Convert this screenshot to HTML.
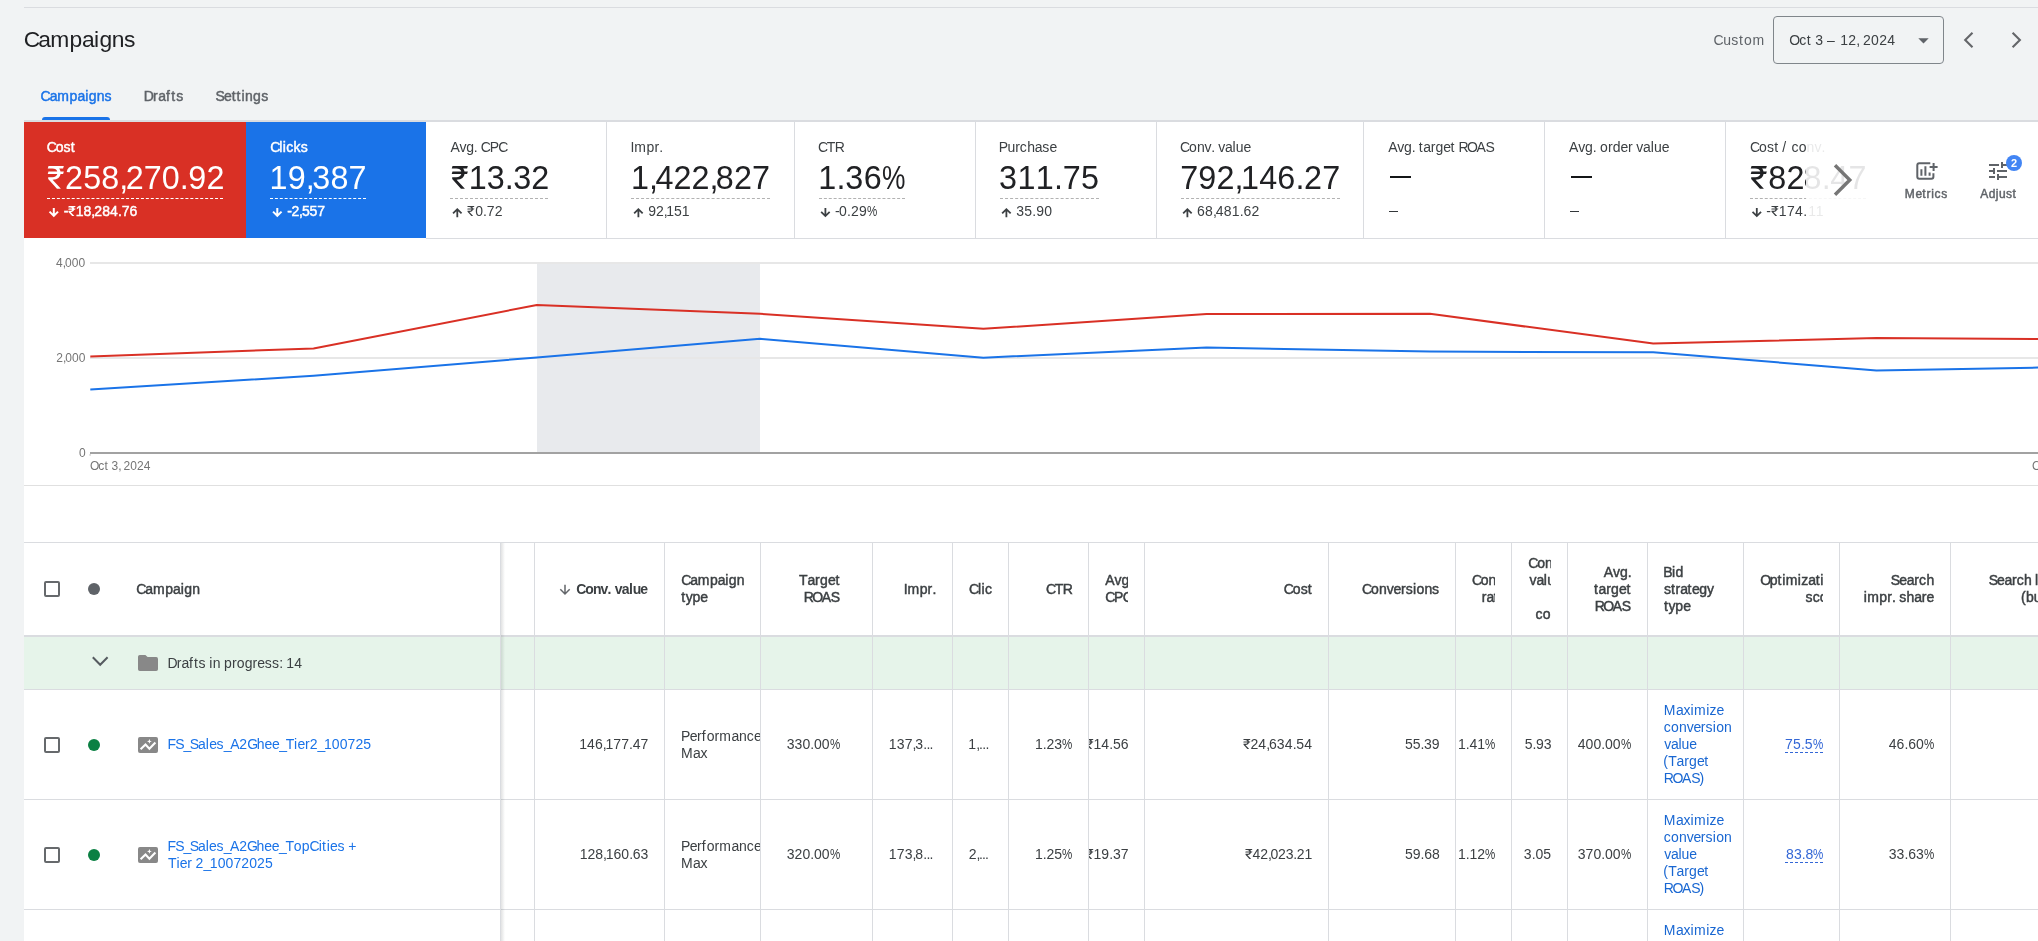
<!DOCTYPE html>
<html lang="en"><head><meta charset="utf-8"><title>Campaigns</title>
<style>
html,body{margin:0;padding:0;background:#f1f3f4}
body{width:2038px;height:941px;overflow:hidden;position:relative;font-family:"Liberation Sans",sans-serif;font-size:14px;color:#3c4043}
.t{position:absolute;white-space:pre;margin:0;padding:0;font-kerning:none}
.clip{position:absolute;overflow:hidden}
.r{position:absolute;display:block}
.dash{position:absolute;height:0;border-top:1px dashed}
#pg{position:absolute;left:0;top:0;width:2038px;height:941px;overflow:hidden;will-change:transform}
</style></head>
<body>
<div id="pg">

<div class="r" style="left:24px;top:7px;width:2014px;height:1px;background:#dadce0;"></div>
<div class="r" style="left:1773px;top:16px;width:169px;height:46px;border:1px solid #80868b;border-radius:4px"></div>
<svg class="r" style="left:1918px;top:37.5px" width="11" height="6"><path d="M0.3 0.2H10.7L5.5 5.4Z" fill="#5f6368"/></svg>
<svg class="r" style="left:1960px;top:30px" width="16" height="20"><path d="M12.5 2.75L5.2 10.05L12.5 17.35" fill="none" stroke="#646669" stroke-width="2.1"/></svg>
<svg class="r" style="left:2009px;top:30px" width="16" height="20"><path d="M3.6 2.75L10.9 10.05L3.6 17.35" fill="none" stroke="#646669" stroke-width="2.1"/></svg>
<div class="r" style="left:24px;top:120px;width:2014px;height:2px;background:#dadce0;"></div>
<div class="r" style="left:42px;top:117px;width:68px;height:3px;background:#1a73e8;border-radius:3px 3px 0 0"></div>
<div class="r" style="left:24px;top:122px;width:2014px;height:819px;background:#fff;"></div>
<div class="r" style="left:24px;top:122px;width:222px;height:116px;background:#d93025;"></div>
<div class="r" style="left:246px;top:122px;width:180px;height:116px;background:#1a73e8;"></div>
<div class="r" style="left:426px;top:238px;width:1612px;height:1px;background:#dadce0;"></div>
<div class="r" style="left:606px;top:122px;width:1px;height:116px;background:#dadce0;"></div>
<div class="r" style="left:794px;top:122px;width:1px;height:116px;background:#dadce0;"></div>
<div class="r" style="left:975px;top:122px;width:1px;height:116px;background:#dadce0;"></div>
<div class="r" style="left:1156px;top:122px;width:1px;height:116px;background:#dadce0;"></div>
<div class="r" style="left:1363px;top:122px;width:1px;height:116px;background:#dadce0;"></div>
<div class="r" style="left:1544px;top:122px;width:1px;height:116px;background:#dadce0;"></div>
<div class="r" style="left:1725px;top:122px;width:1px;height:116px;background:#dadce0;"></div>
<div class="dash" style="left:47px;top:198px;width:176.4px;border-top-color:#fff"></div>
<div class="dash" style="left:270px;top:198px;width:96px;border-top-color:#fff"></div>
<div class="dash" style="left:450px;top:198px;width:98.20000000000005px;border-top-color:#b2b2b2"></div>
<div class="dash" style="left:631px;top:198px;width:139px;border-top-color:#b2b2b2"></div>
<div class="dash" style="left:819px;top:198px;width:86px;border-top-color:#b2b2b2"></div>
<div class="dash" style="left:1000px;top:198px;width:98.5px;border-top-color:#b2b2b2"></div>
<div class="dash" style="left:1181px;top:198px;width:158.5px;border-top-color:#b2b2b2"></div>
<div class="dash" style="left:1750px;top:198px;width:116px;border-top-color:#b2b2b2"></div>
<svg class="r" style="left:0;top:0;overflow:visible" width="1" height="1"><path d="M53.8 207.9V215.88580000000002M49.55 211.63580000000002L53.8 215.88580000000002L58.05 211.63580000000002" fill="none" stroke="#fff" stroke-width="2.0"/></svg>
<svg class="r" style="left:0;top:0;overflow:visible" width="1" height="1"><path d="M277.3 207.9V215.88580000000002M273.05 211.63580000000002L277.3 215.88580000000002L281.55 211.63580000000002" fill="none" stroke="#fff" stroke-width="2.0"/></svg>
<svg class="r" style="left:0;top:0;overflow:visible" width="1" height="1"><path d="M457.3 217.3V209.17278000000002M453.05 213.42278000000002L457.3 209.17278000000002L461.55 213.42278000000002" fill="none" stroke="#3c4043" stroke-width="1.8"/></svg>
<svg class="r" style="left:0;top:0;overflow:visible" width="1" height="1"><path d="M638.4 217.3V209.17278000000002M634.15 213.42278000000002L638.4 209.17278000000002L642.65 213.42278000000002" fill="none" stroke="#3c4043" stroke-width="1.8"/></svg>
<svg class="r" style="left:0;top:0;overflow:visible" width="1" height="1"><path d="M825.4 207.9V216.02722M821.15 211.77722L825.4 216.02722L829.65 211.77722" fill="none" stroke="#3c4043" stroke-width="1.8"/></svg>
<svg class="r" style="left:0;top:0;overflow:visible" width="1" height="1"><path d="M1006.4 217.3V209.17278000000002M1002.15 213.42278000000002L1006.4 209.17278000000002L1010.65 213.42278000000002" fill="none" stroke="#3c4043" stroke-width="1.8"/></svg>
<svg class="r" style="left:0;top:0;overflow:visible" width="1" height="1"><path d="M1187.4 217.3V209.17278000000002M1183.15 213.42278000000002L1187.4 209.17278000000002L1191.65 213.42278000000002" fill="none" stroke="#3c4043" stroke-width="1.8"/></svg>
<svg class="r" style="left:0;top:0;overflow:visible" width="1" height="1"><path d="M1756.8 207.9V216.02722M1752.55 211.77722L1756.8 216.02722L1761.05 211.77722" fill="none" stroke="#3c4043" stroke-width="1.8"/></svg>
<div class="r" style="left:1390px;top:176px;width:21px;height:2px;background:#141618;"></div>
<div class="r" style="left:1389px;top:211px;width:9px;height:1px;background:#33373a;"></div>
<div class="r" style="left:1571px;top:176px;width:21px;height:2px;background:#141618;"></div>
<div class="r" style="left:1570px;top:211px;width:9px;height:1px;background:#33373a;"></div>
<div class="clip" style="left:1726px;top:123px;width:174px;height:115px"><span class="t" style="left:23.91px;top:15.00px;font-size:14px;line-height:18px;letter-spacing:0.17px;color:#3c4043;"><span style="letter-spacing:-1.03px">C</span>o<span style="letter-spacing:0.22px">s</span><span style="letter-spacing:0.67px">t</span><span style="letter-spacing:-0.43px"> </span><span style="letter-spacing:1.87px">/</span><span style="letter-spacing:-0.43px"> </span><span style="letter-spacing:0.32px">c</span>o</span>
<span class="t" style="left:80.50px;top:15.00px;font-size:14px;line-height:18px;letter-spacing:0.00px;color:#3c4043;"><span style="letter-spacing:0.15px">n</span>v.</span>
<span class="t" style="left:23.80px;top:34.00px;font-size:32.3px;line-height:42px;letter-spacing:0.38px;color:#202124;"><svg style="display:inline-block;vertical-align:baseline;width:17.54px;height:22.75px;margin-right:-0.99px;overflow:visible" preserveAspectRatio="none" viewBox="0 0 1059 1456"><path fill="#202124" transform="matrix(1 0 0 -1 0 1456)" d="M45 1298 92 1456H1017L971 1298H734Q798 1218 816 1100H1017L971 942H819Q802 784 691 684Q580 584 336 584L828 12V0H601L72 618L71 742H315Q448 742 524.5 798Q601 854 622 942H43L89 1100H620Q598 1190 523 1244Q448 1298 309 1298Z"/></svg><i style="display:inline-block;width:1.82px"></i>82</span>
<span class="t" style="left:77.59px;top:34.00px;font-size:32.3px;line-height:42px;letter-spacing:0.18px;color:#202124;">8<span style="letter-spacing:-0.37px">.</span>47</span>
<span class="t" style="left:40.37px;top:79.00px;font-size:14px;line-height:18px;letter-spacing:0.41px;color:#3c4043;"><span style="letter-spacing:-0.49px">-</span><svg style="display:inline-block;vertical-align:baseline;width:7.67px;height:9.95px;margin-right:-0.43px;overflow:visible" preserveAspectRatio="none" viewBox="0 0 1059 1456"><path fill="#3c4043" transform="matrix(1 0 0 -1 0 1456)" d="M45 1298 92 1456H1017L971 1298H734Q798 1218 816 1100H1017L971 942H819Q802 784 691 684Q580 584 336 584L828 12V0H601L72 618L71 742H315Q448 742 524.5 798Q601 854 622 942H43L89 1100H620Q598 1190 523 1244Q448 1298 309 1298Z"/></svg><i style="display:inline-block;width:0.94px"></i>174<span style="letter-spacing:0.11px">.</span></span>
<span class="t" style="left:82.30px;top:79.00px;font-size:14px;line-height:18px;letter-spacing:-0.32px;color:#3c4043;">11</span></div>
<div class="r" style="left:1806px;top:123px;width:232px;height:115px;background:rgba(255,255,255,.885);"></div>
<svg class="r" style="left:1820px;top:150px" width="40" height="60"><path d="M15 15.2L29.8 30L15 44.8" fill="none" stroke="#767676" stroke-width="3.4"/></svg>
<div class="r" style="left:1880px;top:123px;width:158px;height:115px;background:#fff;"></div>
<svg class="r" style="left:1913px;top:159px" width="26" height="24" fill="none" stroke="#5f6368" stroke-width="2"><path d="M17.3 4.2H6.3a2 2 0 0 0-2 2V17.8a2 2 0 0 0 2 2H18.4a2 2 0 0 0 2-2V14.2"/><path d="M20.6 4.1V12.1M16.6 8.1H24.6"/><path d="M8.4 10.2V16.8M12.4 7.3V16.8M16.6 13.5V16.8"/></svg>
<svg class="r" style="left:1986px;top:159px" width="24" height="24" viewBox="0 0 24 24"><path fill="#5f6368" d="M3 17v2h6v-2H3zM3 5v2h10V5H3zm10 16v-2h8v-2h-8v-2h-2v6h2zM7 9v2H3v2h4v2h2V9H7zm14 4v-2H11v2h10zm-6-4h2V7h4V5h-4V3h-2v6z"/></svg>
<div class="r" style="left:2006px;top:155px;width:16px;height:16px;background:#4285f4;border-radius:50%"></div>
<div class="r" style="left:24px;top:485px;width:2014px;height:1px;background:#e0e0e0;"></div>
<svg class="r" style="left:0;top:0" width="2038" height="941"><rect x="537" y="263" width="223" height="189.5" fill="#e8eaed"/><rect x="90" y="262" width="1948" height="2" fill="#e7e7e7"/><rect x="90" y="357" width="1948" height="2" fill="#e7e7e7"/><rect x="90" y="452" width="1948" height="2" fill="#a2a2a2"/><rect x="89.4" y="454" width="1.4" height="1.8" fill="#d4d4d4"/><polyline points="90.3,389.5 313.57,375.7 536.84,357.5 760.11,338.8 983.38,357.7 1206.65,347.5 1429.92,351.6 1653.19,352.3 1876.46,370.4 2099.73,366.5" fill="none" stroke="#1a73e8" stroke-width="2" stroke-linejoin="round"/><polyline points="90.3,356.6 313.57,348.4 536.84,305.0 760.11,313.8 983.38,328.8 1206.65,314.0 1429.92,313.8 1653.19,343.6 1876.46,338.0 2099.73,339.4" fill="none" stroke="#d93025" stroke-width="2" stroke-linejoin="round"/></svg>
<div class="r" style="left:24px;top:542px;width:2014px;height:1px;background:#dadce0;"></div>
<div class="r" style="left:24px;top:637px;width:2014px;height:52px;background:#e6f4ea;"></div>
<div class="r" style="left:24px;top:635px;width:2014px;height:2px;background:#dadce0;"></div>
<div class="r" style="left:24px;top:689px;width:2014px;height:1px;background:#dadce0;"></div>
<div class="r" style="left:24px;top:799px;width:2014px;height:1px;background:#dadce0;"></div>
<div class="r" style="left:24px;top:909px;width:2014px;height:1px;background:#dadce0;"></div>
<div class="r" style="left:534px;top:543px;width:1px;height:398px;background:#dadce0;"></div>
<div class="r" style="left:664px;top:543px;width:1px;height:398px;background:#dadce0;"></div>
<div class="r" style="left:760px;top:543px;width:1px;height:398px;background:#dadce0;"></div>
<div class="r" style="left:872px;top:543px;width:1px;height:398px;background:#dadce0;"></div>
<div class="r" style="left:952px;top:543px;width:1px;height:398px;background:#dadce0;"></div>
<div class="r" style="left:1008px;top:543px;width:1px;height:398px;background:#dadce0;"></div>
<div class="r" style="left:1088px;top:543px;width:1px;height:398px;background:#dadce0;"></div>
<div class="r" style="left:1144px;top:543px;width:1px;height:398px;background:#dadce0;"></div>
<div class="r" style="left:1328px;top:543px;width:1px;height:398px;background:#dadce0;"></div>
<div class="r" style="left:1455px;top:543px;width:1px;height:398px;background:#dadce0;"></div>
<div class="r" style="left:1511px;top:543px;width:1px;height:398px;background:#dadce0;"></div>
<div class="r" style="left:1567px;top:543px;width:1px;height:398px;background:#dadce0;"></div>
<div class="r" style="left:1647px;top:543px;width:1px;height:398px;background:#dadce0;"></div>
<div class="r" style="left:1743px;top:543px;width:1px;height:398px;background:#dadce0;"></div>
<div class="r" style="left:1839px;top:543px;width:1px;height:398px;background:#dadce0;"></div>
<div class="r" style="left:1950px;top:543px;width:1px;height:398px;background:#dadce0;"></div>
<div class="r" style="left:500px;top:543px;width:1px;height:398px;background:#dadce0;"></div>
<div class="r" style="left:501px;top:543px;width:4px;height:398px;background:linear-gradient(to right,rgba(60,64,67,.15),rgba(60,64,67,0));"></div>
<div class="r" style="left:44px;top:581px;width:12px;height:12px;border:2px solid #66696c;border-radius:2px"></div>
<div class="r" style="left:88px;top:583px;width:12px;height:12px;background:#5f6368;border-radius:50%"></div>
<div class="r" style="left:44px;top:737px;width:12px;height:12px;border:2px solid #66696c;border-radius:2px;background:#fff"></div>
<div class="r" style="left:88px;top:739px;width:12px;height:12px;background:#0b8043;border-radius:50%"></div>
<svg class="r" style="left:138px;top:737px" width="20" height="16"><rect width="20" height="16" rx="1.9" fill="#888"/><path d="M2.6 12.3L7.5 7.6L11.4 11.7L17.4 5.6" fill="none" stroke="#fff" stroke-width="2.1"/><path d="M11.4 2L12.1 3.7L13.8 4.4L12.1 5.1L11.4 6.8L10.7 5.1L9 4.4L10.7 3.7Z" fill="#fff"/></svg>
<div class="r" style="left:44px;top:847px;width:12px;height:12px;border:2px solid #66696c;border-radius:2px;background:#fff"></div>
<div class="r" style="left:88px;top:849px;width:12px;height:12px;background:#0b8043;border-radius:50%"></div>
<svg class="r" style="left:138px;top:847px" width="20" height="16"><rect width="20" height="16" rx="1.9" fill="#888"/><path d="M2.6 12.3L7.5 7.6L11.4 11.7L17.4 5.6" fill="none" stroke="#fff" stroke-width="2.1"/><path d="M11.4 2L12.1 3.7L13.8 4.4L12.1 5.1L11.4 6.8L10.7 5.1L9 4.4L10.7 3.7Z" fill="#fff"/></svg>
<svg class="r" style="left:0;top:0;overflow:visible" width="1" height="1"><path d="M565.0 584.8V593.93935M560.3 589.23935L565.0 593.93935L569.7 589.23935" fill="none" stroke="#63666a" stroke-width="1.5"/></svg>
<svg class="r" style="left:90px;top:654px" width="20" height="16"><path d="M2.8 3.2L10.2 10.8L17.6 3.2" fill="none" stroke="#565b60" stroke-width="2"/></svg>
<svg class="r" style="left:138px;top:655px" width="20" height="16"><path d="M1.8 0H7.4L9.6 2.1H18.2A1.8 1.8 0 0 1 20 3.9V14.2A1.8 1.8 0 0 1 18.2 16H1.8A1.8 1.8 0 0 1 0 14.2V1.8A1.8 1.8 0 0 1 1.8 0Z" fill="#888"/></svg>
<div class="dash" style="left:1785px;top:752px;width:38px;border-top-color:#3367d6"></div>
<div class="dash" style="left:1785px;top:862px;width:38px;border-top-color:#3367d6"></div>
<span class="t" style="left:23.80px;top:25.00px;font-size:22.8px;line-height:29px;letter-spacing:-0.65px;color:#202124;"><span style="letter-spacing:-2.10px">C</span>a<span style="letter-spacing:0.35px">m</span><span style="letter-spacing:-0.30px">p</span>a<span style="letter-spacing:0.35px">i</span><span style="letter-spacing:-0.30px">g</span><span style="letter-spacing:-0.50px">n</span><span style="letter-spacing:0.00px">s</span></span>
<span class="t" style="left:1713.61px;top:31.00px;font-size:14px;line-height:18px;letter-spacing:-0.58px;color:#5f6368;">C<span style="letter-spacing:0.37px">u</span><span style="letter-spacing:0.67px">s</span><span style="letter-spacing:1.12px">t</span><span style="letter-spacing:0.62px">o</span><span style="letter-spacing:1.02px">m</span></span>
<span class="t" style="left:1789.28px;top:31.00px;font-size:14px;line-height:18px;letter-spacing:0.31px;color:#3c4043;"><span style="letter-spacing:-1.04px">O</span><span style="letter-spacing:0.56px">c</span><span style="letter-spacing:0.91px">t</span><span style="letter-spacing:-0.19px"> </span>3<span style="letter-spacing:-0.19px"> </span><span style="letter-spacing:1.61px">–</span><span style="letter-spacing:-0.19px"> </span>12<span style="letter-spacing:-0.94px">,</span><span style="letter-spacing:-0.19px"> </span>2024</span>
<span class="t" style="left:40.46px;top:87.00px;font-size:14px;line-height:18px;letter-spacing:-0.16px;color:#1a73e8;-webkit-text-stroke:0.45px #1a73e8;"><span style="letter-spacing:-0.91px">C</span>a<span style="letter-spacing:0.59px">m</span><span style="letter-spacing:0.14px">p</span>a<span style="letter-spacing:0.49px">i</span><span style="letter-spacing:0.19px">g</span><span style="letter-spacing:0.04px">n</span><span style="letter-spacing:0.29px">s</span></span>
<span class="t" style="left:143.70px;top:87.00px;font-size:14px;line-height:18px;letter-spacing:0.49px;color:#5f6368;-webkit-text-stroke:0.45px #5f6368;"><span style="letter-spacing:-0.71px">D</span>r<span style="letter-spacing:0.04px">a</span><span style="letter-spacing:1.29px">f</span><span style="letter-spacing:0.99px">t</span>s</span>
<span class="t" style="left:215.53px;top:87.00px;font-size:14px;line-height:18px;letter-spacing:0.90px;color:#5f6368;-webkit-text-stroke:0.45px #5f6368;"><span style="letter-spacing:-0.75px">S</span><span style="letter-spacing:-0.10px">e</span>tt<span style="letter-spacing:0.60px">i</span><span style="letter-spacing:0.15px">n</span><span style="letter-spacing:0.30px">g</span><span style="letter-spacing:0.40px">s</span></span>
<span class="t" style="left:46.76px;top:138.00px;font-size:14px;line-height:18px;letter-spacing:-1.12px;color:#fff;-webkit-text-stroke:0.45px #fff;">C<span style="letter-spacing:0.03px">o</span><span style="letter-spacing:0.08px">s</span><span style="letter-spacing:0.58px">t</span></span>
<span class="t" style="left:47.00px;top:157.00px;font-size:32.3px;line-height:42px;letter-spacing:0.10px;color:#fff;"><svg style="display:inline-block;vertical-align:baseline;width:17.54px;height:22.75px;margin-right:-0.99px;overflow:visible" preserveAspectRatio="none" viewBox="0 0 1059 1456"><path fill="#fff" transform="matrix(1 0 0 -1 0 1456)" d="M45 1298 92 1456H1017L971 1298H734Q798 1218 816 1100H1017L971 942H819Q802 784 691 684Q580 584 336 584L828 12V0H601L72 618L71 742H315Q448 742 524.5 798Q601 854 622 942H43L89 1100H620Q598 1190 523 1244Q448 1298 309 1298Z"/></svg><i style="display:inline-block;width:1.54px"></i>258<span style="letter-spacing:-2.60px">,</span>270<span style="letter-spacing:-0.45px">.</span>92</span>
<span class="t" style="left:63.77px;top:202.00px;font-size:14px;line-height:18px;letter-spacing:0.06px;color:#fff;-webkit-text-stroke:0.45px #fff;"><span style="letter-spacing:-0.14px">-</span><svg style="display:inline-block;vertical-align:baseline;width:7.80px;height:9.95px;margin-right:-0.44px;overflow:visible" preserveAspectRatio="none" viewBox="0 0 1076 1456"><path fill="#fff" transform="matrix(1 0 0 -1 0 1456)" d="M40 1253 95 1456H1036L985 1274H768Q819 1200 834 1098H1036L985 916H836Q815 764 711.5 670Q608 576 391 558L857 13V0H571L62 594L61 747H313Q425 747 491 794Q557 841 579 916H41L91 1098H574Q527 1248 327 1253Z"/></svg><i style="display:inline-block;width:-0.09px"></i>18<span style="letter-spacing:-0.89px">,</span>284<span style="letter-spacing:-0.09px">.</span>76</span>
<span class="t" style="left:270.26px;top:138.00px;font-size:14px;line-height:18px;letter-spacing:0.34px;color:#fff;-webkit-text-stroke:0.45px #fff;"><span style="letter-spacing:-1.06px">C</span>li<span style="letter-spacing:0.24px">c</span><span style="letter-spacing:0.19px">k</span><span style="letter-spacing:0.14px">s</span></span>
<span class="t" style="left:269.60px;top:157.00px;font-size:32.3px;line-height:42px;letter-spacing:0.17px;color:#fff;">19<span style="letter-spacing:-2.53px">,</span>387</span>
<span class="t" style="left:287.17px;top:202.00px;font-size:14px;line-height:18px;letter-spacing:-0.16px;color:#fff;-webkit-text-stroke:0.45px #fff;"><span style="letter-spacing:-0.36px">-</span>2<span style="letter-spacing:-1.11px">,</span>557</span>
<span class="t" style="left:450.57px;top:138.00px;font-size:14px;line-height:18px;letter-spacing:-0.38px;color:#3c4043;">Av<span style="letter-spacing:-0.08px">g</span>.<span style="letter-spacing:-0.58px"> </span><span style="letter-spacing:-1.18px">C</span><span style="letter-spacing:-0.68px">P</span><span style="letter-spacing:-1.18px">C</span></span>
<span class="t" style="left:450.60px;top:157.00px;font-size:32.3px;line-height:42px;letter-spacing:0.06px;color:#202124;"><svg style="display:inline-block;vertical-align:baseline;width:17.54px;height:22.75px;margin-right:-0.99px;overflow:visible" preserveAspectRatio="none" viewBox="0 0 1059 1456"><path fill="#202124" transform="matrix(1 0 0 -1 0 1456)" d="M45 1298 92 1456H1017L971 1298H734Q798 1218 816 1100H1017L971 942H819Q802 784 691 684Q580 584 336 584L828 12V0H601L72 618L71 742H315Q448 742 524.5 798Q601 854 622 942H43L89 1100H620Q598 1190 523 1244Q448 1298 309 1298Z"/></svg><i style="display:inline-block;width:1.50px"></i>13<span style="letter-spacing:-0.49px">.</span>32</span>
<span class="t" style="left:467.36px;top:202.00px;font-size:14px;line-height:18px;letter-spacing:0.10px;color:#3c4043;"><svg style="display:inline-block;vertical-align:baseline;width:7.67px;height:9.95px;margin-right:-0.43px;overflow:visible" preserveAspectRatio="none" viewBox="0 0 1059 1456"><path fill="#3c4043" transform="matrix(1 0 0 -1 0 1456)" d="M45 1298 92 1456H1017L971 1298H734Q798 1218 816 1100H1017L971 942H819Q802 784 691 684Q580 584 336 584L828 12V0H601L72 618L71 742H315Q448 742 524.5 798Q601 854 622 942H43L89 1100H620Q598 1190 523 1244Q448 1298 309 1298Z"/></svg><i style="display:inline-block;width:0.63px"></i>0<span style="letter-spacing:-0.20px">.</span>72</span>
<span class="t" style="left:630.59px;top:138.00px;font-size:14px;line-height:18px;letter-spacing:0.06px;color:#3c4043;"><span style="letter-spacing:-0.14px">I</span><span style="letter-spacing:0.56px">m</span>pr<span style="letter-spacing:-0.24px">.</span></span>
<span class="t" style="left:631.00px;top:157.00px;font-size:32.3px;line-height:42px;letter-spacing:0.07px;color:#202124;">1<span style="letter-spacing:-2.63px">,</span>422<span style="letter-spacing:-2.63px">,</span>827</span>
<span class="t" style="left:648.14px;top:202.00px;font-size:14px;line-height:18px;letter-spacing:-0.02px;color:#3c4043;">92<span style="letter-spacing:-1.27px">,</span>151</span>
<span class="t" style="left:818.01px;top:138.00px;font-size:14px;line-height:18px;letter-spacing:-1.42px;color:#3c4043;">C<span style="letter-spacing:-0.62px">T</span><span style="letter-spacing:-1.92px">R</span></span>
<span class="t" style="left:818.30px;top:157.00px;font-size:32.3px;line-height:42px;letter-spacing:0.33px;color:#202124;">1<span style="letter-spacing:-0.22px">.</span>36<span style="display:inline-block;width:23.77px;letter-spacing:0;transform:scaleX(0.816);transform-origin:0 50%">%</span></span>
<span class="t" style="left:834.97px;top:202.00px;font-size:14px;line-height:18px;letter-spacing:0.25px;color:#3c4043;"><span style="letter-spacing:-0.65px">-</span>0<span style="letter-spacing:-0.05px">.</span>29<span style="display:inline-block;width:10.40px;letter-spacing:0;transform:scaleX(0.824);transform-origin:0 50%">%</span></span>
<span class="t" style="left:998.70px;top:138.00px;font-size:14px;line-height:18px;letter-spacing:-0.57px;color:#3c4043;">P<span style="letter-spacing:-0.12px">u</span><span style="letter-spacing:0.03px">r</span><span style="letter-spacing:0.28px">c</span><span style="letter-spacing:-0.17px">h</span><span style="letter-spacing:-0.22px">a</span><span style="letter-spacing:0.18px">s</span><span style="letter-spacing:-0.42px">e</span></span>
<span class="t" style="left:999.10px;top:157.00px;font-size:32.3px;line-height:42px;letter-spacing:0.32px;color:#202124;">311<span style="letter-spacing:-0.23px">.</span>75</span>
<span class="t" style="left:1016.28px;top:202.00px;font-size:14px;line-height:18px;letter-spacing:0.24px;color:#3c4043;">35<span style="letter-spacing:-0.06px">.</span>90</span>
<span class="t" style="left:1180.01px;top:138.00px;font-size:14px;line-height:18px;letter-spacing:-0.31px;color:#3c4043;"><span style="letter-spacing:-1.11px">C</span><span style="letter-spacing:0.09px">o</span><span style="letter-spacing:-0.16px">n</span>v.<span style="letter-spacing:-0.51px"> </span>v<span style="letter-spacing:-0.26px">a</span><span style="letter-spacing:0.19px">l</span><span style="letter-spacing:-0.16px">u</span><span style="letter-spacing:-0.46px">e</span></span>
<span class="t" style="left:1180.14px;top:157.00px;font-size:32.3px;line-height:42px;letter-spacing:0.18px;color:#202124;">792<span style="letter-spacing:-2.52px">,</span>146<span style="letter-spacing:-0.37px">.</span>27</span>
<span class="t" style="left:1197.12px;top:202.00px;font-size:14px;line-height:18px;letter-spacing:0.17px;color:#3c4043;">68<span style="letter-spacing:-1.08px">,</span>481<span style="letter-spacing:-0.13px">.</span>62</span>
<span class="t" style="left:1388.27px;top:138.00px;font-size:14px;line-height:18px;letter-spacing:-0.31px;color:#3c4043;">Av<span style="letter-spacing:-0.01px">g</span>.<span style="letter-spacing:-0.51px"> </span><span style="letter-spacing:0.59px">t</span><span style="letter-spacing:-0.26px">a</span><span style="letter-spacing:-0.01px">rg</span><span style="letter-spacing:-0.46px">e</span><span style="letter-spacing:0.59px">t</span><span style="letter-spacing:-0.51px"> </span><span style="letter-spacing:-1.61px">R</span><span style="letter-spacing:-1.36px">O</span>A<span style="letter-spacing:-1.16px">S</span></span>
<span class="t" style="left:1569.07px;top:138.00px;font-size:14px;line-height:18px;letter-spacing:-0.22px;color:#3c4043;">Av<span style="letter-spacing:0.08px">g</span>.<span style="letter-spacing:-0.42px"> </span><span style="letter-spacing:0.18px">o</span><span style="letter-spacing:0.08px">rd</span><span style="letter-spacing:-0.37px">e</span><span style="letter-spacing:0.08px">r</span><span style="letter-spacing:-0.42px"> </span>v<span style="letter-spacing:-0.17px">a</span><span style="letter-spacing:0.28px">l</span><span style="letter-spacing:-0.07px">u</span><span style="letter-spacing:-0.37px">e</span></span>
<span class="t" style="left:1904.63px;top:186.00px;font-size:12px;line-height:16px;letter-spacing:0.55px;color:#5f6368;-webkit-text-stroke:0.45px #5f6368;"><span style="letter-spacing:0.85px">M</span><span style="letter-spacing:0.10px">e</span><span style="letter-spacing:1.00px">t</span>r<span style="letter-spacing:0.75px">i</span><span style="letter-spacing:0.65px">c</span>s</span>
<span class="t" style="left:1980.30px;top:186.00px;font-size:12px;line-height:16px;letter-spacing:0.32px;color:#5f6368;-webkit-text-stroke:0.45px #5f6368;">A<span style="letter-spacing:0.42px">d</span><span style="letter-spacing:0.67px">j</span>u<span style="letter-spacing:0.52px">s</span><span style="letter-spacing:0.97px">t</span></span>
<span class="t" style="left:2011.00px;top:156.00px;font-size:11px;line-height:14px;letter-spacing:0.15px;color:#fff;font-weight:700;">2</span>
<span class="t" style="left:56.04px;top:255.00px;font-size:12px;line-height:16px;letter-spacing:-0.00px;color:#757575;">4<span style="letter-spacing:-1.00px">,</span>000</span>
<span class="t" style="left:56.35px;top:350.00px;font-size:12px;line-height:16px;letter-spacing:-0.01px;color:#757575;">2<span style="letter-spacing:-1.01px">,</span>000</span>
<span class="t" style="left:79.00px;top:445.00px;font-size:12px;line-height:16px;letter-spacing:-0.17px;color:#757575;">0</span>
<span class="t" style="left:89.92px;top:458.00px;font-size:12px;line-height:16px;letter-spacing:0.06px;color:#757575;"><span style="letter-spacing:-1.09px">O</span><span style="letter-spacing:0.31px">c</span><span style="letter-spacing:0.61px">t</span><span style="letter-spacing:-0.34px"> </span>3<span style="letter-spacing:-0.94px">,</span><span style="letter-spacing:-0.34px"> </span>2024</span>
<span class="t" style="left:2032.00px;top:458.00px;font-size:12px;line-height:16px;letter-spacing:0.04px;color:#757575;"><span style="letter-spacing:-1.11px">O</span><span style="letter-spacing:0.29px">c</span><span style="letter-spacing:0.59px">t</span><span style="letter-spacing:-0.36px"> </span>12<span style="letter-spacing:-0.96px">,</span><span style="letter-spacing:-0.36px"> </span>2024</span>
<span class="t" style="left:136.16px;top:580.00px;font-size:14px;line-height:18px;letter-spacing:-0.18px;color:#3c4043;-webkit-text-stroke:0.45px #3c4043;"><span style="letter-spacing:-0.93px">C</span>a<span style="letter-spacing:0.57px">m</span><span style="letter-spacing:0.12px">p</span>a<span style="letter-spacing:0.47px">i</span><span style="letter-spacing:0.17px">g</span><span style="letter-spacing:0.02px">n</span></span>
<span class="t" style="left:576.16px;top:580.00px;font-size:14px;line-height:18px;letter-spacing:-0.86px;color:#3c4043;font-weight:700;"><span style="letter-spacing:-1.11px">C</span><span style="letter-spacing:-0.81px">o</span>nv<span style="letter-spacing:0.04px">.</span><span style="letter-spacing:-0.56px"> </span>v<span style="letter-spacing:-0.46px">a</span><span style="letter-spacing:-0.36px">l</span>u<span style="letter-spacing:-0.36px">e</span></span>
<span class="t" style="left:681.16px;top:571.00px;font-size:14px;line-height:18px;letter-spacing:-0.27px;color:#3c4043;-webkit-text-stroke:0.45px #3c4043;"><span style="letter-spacing:-1.02px">C</span>a<span style="letter-spacing:0.48px">m</span><span style="letter-spacing:0.03px">p</span>a<span style="letter-spacing:0.38px">i</span><span style="letter-spacing:0.08px">g</span><span style="letter-spacing:-0.07px">n</span></span>
<span class="t" style="left:681.20px;top:588.00px;font-size:14px;line-height:18px;letter-spacing:0.69px;color:#3c4043;-webkit-text-stroke:0.45px #3c4043;">t<span style="letter-spacing:-0.26px">y</span><span style="letter-spacing:0.04px">p</span><span style="letter-spacing:-0.31px">e</span></span>
<span class="t" style="left:798.95px;top:571.00px;font-size:14px;line-height:18px;letter-spacing:-0.04px;color:#3c4043;-webkit-text-stroke:0.45px #3c4043;">T<span style="letter-spacing:-0.19px">a</span><span style="letter-spacing:0.26px">r</span><span style="letter-spacing:0.16px">g</span><span style="letter-spacing:-0.24px">e</span><span style="letter-spacing:0.76px">t</span></span>
<span class="t" style="left:803.85px;top:588.00px;font-size:14px;line-height:18px;letter-spacing:-1.69px;color:#3c4043;-webkit-text-stroke:0.45px #3c4043;">R<span style="letter-spacing:-1.54px">O</span><span style="letter-spacing:-0.34px">A</span><span style="letter-spacing:-1.24px">S</span></span>
<span class="t" style="left:903.64px;top:580.00px;font-size:14px;line-height:18px;letter-spacing:0.01px;color:#3c4043;-webkit-text-stroke:0.45px #3c4043;">I<span style="letter-spacing:0.51px">m</span><span style="letter-spacing:0.06px">p</span><span style="letter-spacing:0.21px">r</span><span style="letter-spacing:-0.04px">.</span></span>
<span class="t" style="left:1046.00px;top:580.00px;font-size:14px;line-height:18px;letter-spacing:-1.37px;color:#3c4043;-webkit-text-stroke:0.45px #3c4043;">C<span style="letter-spacing:-0.47px">T</span><span style="letter-spacing:-1.77px">R</span></span>
<span class="t" style="left:1283.80px;top:580.00px;font-size:14px;line-height:18px;letter-spacing:-1.12px;color:#3c4043;-webkit-text-stroke:0.45px #3c4043;">C<span style="letter-spacing:0.03px">o</span><span style="letter-spacing:0.08px">s</span><span style="letter-spacing:0.58px">t</span></span>
<span class="t" style="left:1362.00px;top:580.00px;font-size:14px;line-height:18px;letter-spacing:0.16px;color:#3c4043;-webkit-text-stroke:0.45px #3c4043;"><span style="letter-spacing:-1.04px">C</span><span style="letter-spacing:0.11px">o</span><span style="letter-spacing:-0.09px">n</span><span style="letter-spacing:-0.14px">v</span><span style="letter-spacing:-0.34px">e</span>rs<span style="letter-spacing:0.36px">i</span><span style="letter-spacing:0.11px">o</span><span style="letter-spacing:-0.09px">n</span>s</span>
<span class="t" style="left:1603.70px;top:563.00px;font-size:14px;line-height:18px;letter-spacing:-0.03px;color:#3c4043;-webkit-text-stroke:0.45px #3c4043;">A<span style="letter-spacing:-0.08px">v</span><span style="letter-spacing:0.12px">g</span>.</span>
<span class="t" style="left:1593.95px;top:580.00px;font-size:14px;line-height:18px;letter-spacing:0.74px;color:#3c4043;-webkit-text-stroke:0.45px #3c4043;">t<span style="letter-spacing:-0.21px">a</span><span style="letter-spacing:0.24px">r</span><span style="letter-spacing:0.14px">g</span><span style="letter-spacing:-0.26px">e</span>t</span>
<span class="t" style="left:1594.85px;top:597.00px;font-size:14px;line-height:18px;letter-spacing:-1.69px;color:#3c4043;-webkit-text-stroke:0.45px #3c4043;">R<span style="letter-spacing:-1.54px">O</span><span style="letter-spacing:-0.34px">A</span><span style="letter-spacing:-1.24px">S</span></span>
<span class="t" style="left:1663.30px;top:563.00px;font-size:14px;line-height:18px;letter-spacing:-0.60px;color:#3c4043;-webkit-text-stroke:0.45px #3c4043;">B<span style="letter-spacing:0.35px">i</span><span style="letter-spacing:0.00px">d</span></span>
<span class="t" style="left:1663.92px;top:580.00px;font-size:14px;line-height:18px;letter-spacing:0.05px;color:#3c4043;-webkit-text-stroke:0.45px #3c4043;">s<span style="letter-spacing:0.55px">t</span>r<span style="letter-spacing:-0.40px">a</span><span style="letter-spacing:0.55px">t</span><span style="letter-spacing:-0.45px">e</span><span style="letter-spacing:-0.05px">g</span><span style="letter-spacing:-0.40px">y</span></span>
<span class="t" style="left:1664.00px;top:597.00px;font-size:14px;line-height:18px;letter-spacing:0.69px;color:#3c4043;-webkit-text-stroke:0.45px #3c4043;">t<span style="letter-spacing:-0.26px">y</span><span style="letter-spacing:0.04px">p</span><span style="letter-spacing:-0.31px">e</span></span>
<span class="t" style="left:1890.83px;top:571.00px;font-size:14px;line-height:18px;letter-spacing:-0.96px;color:#3c4043;-webkit-text-stroke:0.45px #3c4043;">S<span style="letter-spacing:-0.31px">e</span><span style="letter-spacing:-0.26px">a</span><span style="letter-spacing:0.19px">r</span><span style="letter-spacing:0.29px">c</span><span style="letter-spacing:-0.06px">h</span></span>
<span class="t" style="left:1863.70px;top:588.00px;font-size:14px;line-height:18px;letter-spacing:0.18px;color:#3c4043;-webkit-text-stroke:0.45px #3c4043;"><span style="letter-spacing:0.38px">i</span><span style="letter-spacing:0.48px">m</span><span style="letter-spacing:0.03px">p</span>r<span style="letter-spacing:-0.07px">.</span><span style="letter-spacing:-0.47px"> </span>s<span style="letter-spacing:-0.07px">h</span><span style="letter-spacing:-0.27px">a</span>r<span style="letter-spacing:-0.32px">e</span></span>
<span class="t" style="left:1988.63px;top:571.00px;font-size:14px;line-height:18px;letter-spacing:-1.00px;color:#3c4043;-webkit-text-stroke:0.45px #3c4043;">S<span style="letter-spacing:-0.35px">e</span><span style="letter-spacing:-0.30px">a</span><span style="letter-spacing:0.15px">r</span><span style="letter-spacing:0.25px">c</span><span style="letter-spacing:-0.10px">h</span><span style="letter-spacing:-0.50px"> </span><span style="letter-spacing:0.35px">l</span><span style="letter-spacing:0.10px">o</span><span style="letter-spacing:0.15px">s</span><span style="letter-spacing:0.65px">t</span><span style="letter-spacing:-0.50px"> </span><span style="letter-spacing:-0.05px">I</span>S</span>
<span class="t" style="left:2021.08px;top:588.00px;font-size:14px;line-height:18px;letter-spacing:-0.01px;color:#3c4043;-webkit-text-stroke:0.45px #3c4043;"><span style="letter-spacing:0.14px">(</span>b<span style="letter-spacing:-0.11px">u</span>d<span style="letter-spacing:0.04px">g</span><span style="letter-spacing:-0.36px">e</span><span style="letter-spacing:0.64px">t</span><span style="letter-spacing:0.19px">)</span></span>
<span class="t" style="left:167.40px;top:654.00px;font-size:14px;line-height:18px;letter-spacing:0.11px;color:#3c4043;"><span style="letter-spacing:-0.89px">D</span>r<span style="letter-spacing:-0.14px">a</span><span style="letter-spacing:1.01px">f</span><span style="letter-spacing:0.71px">t</span><span style="letter-spacing:0.26px">s</span><span style="letter-spacing:-0.39px"> </span><span style="letter-spacing:0.31px">i</span><span style="letter-spacing:-0.04px">n</span><span style="letter-spacing:-0.39px"> </span>pr<span style="letter-spacing:0.21px">o</span>gr<span style="letter-spacing:-0.34px">e</span><span style="letter-spacing:0.26px">ss</span><span style="letter-spacing:-0.49px">:</span><span style="letter-spacing:-0.39px"> </span>14</span>
<span class="t" style="left:167.40px;top:735.00px;font-size:14px;line-height:18px;letter-spacing:0.10px;color:#1a73e8;"><span style="letter-spacing:-0.80px">F</span><span style="letter-spacing:-1.05px">S</span><span style="letter-spacing:-1.45px">_</span><span style="letter-spacing:-1.05px">S</span><span style="letter-spacing:-0.15px">a</span><span style="letter-spacing:0.30px">l</span><span style="letter-spacing:-0.35px">e</span><span style="letter-spacing:0.25px">s</span><span style="letter-spacing:-1.45px">_</span><span style="letter-spacing:-0.20px">A</span>2<span style="letter-spacing:-1.35px">G</span><span style="letter-spacing:-0.10px">h</span><span style="letter-spacing:-0.35px">ee</span><span style="letter-spacing:-1.45px">_</span><span style="letter-spacing:-0.20px">T</span><span style="letter-spacing:0.30px">i</span><span style="letter-spacing:-0.35px">e</span>r2<span style="letter-spacing:-1.45px">_</span>100725</span>
<span class="t" style="left:579.28px;top:735.00px;font-size:14px;line-height:18px;letter-spacing:0.06px;color:#3c4043;">146<span style="letter-spacing:-1.19px">,</span>177<span style="letter-spacing:-0.24px">.</span>47</span>
<span class="t" style="left:786.70px;top:735.00px;font-size:14px;line-height:18px;letter-spacing:0.07px;color:#3c4043;">330<span style="letter-spacing:-0.23px">.</span>00<span style="display:inline-block;width:10.22px;letter-spacing:0;transform:scaleX(0.824);transform-origin:0 50%">%</span></span>
<span class="t" style="left:888.80px;top:735.00px;font-size:14px;line-height:18px;letter-spacing:0.14px;color:#3c4043;">137<span style="letter-spacing:-1.11px">,</span>3<span style="letter-spacing:-0.73px">...</span></span>
<span class="t" style="left:968.30px;top:735.00px;font-size:14px;line-height:18px;letter-spacing:0.17px;color:#3c4043;">1<span style="letter-spacing:-1.08px">,</span><span style="letter-spacing:-0.70px">...</span></span>
<span class="t" style="left:1035.00px;top:735.00px;font-size:14px;line-height:18px;letter-spacing:0.02px;color:#3c4043;">1<span style="letter-spacing:-0.28px">.</span>23<span style="display:inline-block;width:10.18px;letter-spacing:0;transform:scaleX(0.824);transform-origin:0 50%">%</span></span>
<span class="t" style="left:1243.00px;top:735.00px;font-size:14px;line-height:18px;letter-spacing:0.10px;color:#3c4043;"><svg style="display:inline-block;vertical-align:baseline;width:7.67px;height:9.95px;margin-right:-0.43px;overflow:visible" preserveAspectRatio="none" viewBox="0 0 1059 1456"><path fill="#3c4043" transform="matrix(1 0 0 -1 0 1456)" d="M45 1298 92 1456H1017L971 1298H734Q798 1218 816 1100H1017L971 942H819Q802 784 691 684Q580 584 336 584L828 12V0H601L72 618L71 742H315Q448 742 524.5 798Q601 854 622 942H43L89 1100H620Q598 1190 523 1244Q448 1298 309 1298Z"/></svg><i style="display:inline-block;width:0.19px"></i>24<span style="letter-spacing:-1.15px">,</span>634<span style="letter-spacing:-0.20px">.</span>54</span>
<span class="t" style="left:1404.90px;top:735.00px;font-size:14px;line-height:18px;letter-spacing:-0.01px;color:#3c4043;">55<span style="letter-spacing:-0.31px">.</span>39</span>
<span class="t" style="left:1458.00px;top:735.00px;font-size:14px;line-height:18px;letter-spacing:0.02px;color:#3c4043;">1<span style="letter-spacing:-0.28px">.</span>41<span style="display:inline-block;width:10.18px;letter-spacing:0;transform:scaleX(0.824);transform-origin:0 50%">%</span></span>
<span class="t" style="left:1524.70px;top:735.00px;font-size:14px;line-height:18px;letter-spacing:-0.06px;color:#3c4043;">5<span style="letter-spacing:-0.36px">.</span>93</span>
<span class="t" style="left:1577.70px;top:735.00px;font-size:14px;line-height:18px;letter-spacing:0.06px;color:#3c4043;">400<span style="letter-spacing:-0.24px">.</span>00<span style="display:inline-block;width:10.21px;letter-spacing:0;transform:scaleX(0.824);transform-origin:0 50%">%</span></span>
<span class="t" style="left:1663.80px;top:701.00px;font-size:14px;line-height:18px;letter-spacing:-0.08px;color:#1967d2;"><span style="letter-spacing:0.52px">M</span><span style="letter-spacing:-0.18px">a</span>x<span style="letter-spacing:0.27px">i</span><span style="letter-spacing:0.57px">m</span><span style="letter-spacing:0.27px">i</span>z<span style="letter-spacing:-0.38px">e</span></span>
<span class="t" style="left:1663.75px;top:718.00px;font-size:14px;line-height:18px;letter-spacing:0.15px;color:#1967d2;"><span style="letter-spacing:0.30px">c</span>o<span style="letter-spacing:-0.10px">n</span><span style="letter-spacing:-0.25px">v</span><span style="letter-spacing:-0.40px">e</span><span style="letter-spacing:0.05px">r</span><span style="letter-spacing:0.20px">s</span><span style="letter-spacing:0.25px">i</span>o<span style="letter-spacing:-0.10px">n</span></span>
<span class="t" style="left:1664.29px;top:735.00px;font-size:14px;line-height:18px;letter-spacing:-0.38px;color:#1967d2;">v<span style="letter-spacing:-0.33px">a</span><span style="letter-spacing:0.12px">l</span><span style="letter-spacing:-0.23px">u</span><span style="letter-spacing:-0.53px">e</span></span>
<span class="t" style="left:1663.30px;top:752.00px;font-size:14px;line-height:18px;letter-spacing:0.12px;color:#1967d2;"><span style="letter-spacing:0.17px">(</span><span style="letter-spacing:-0.18px">T</span><span style="letter-spacing:-0.13px">a</span>rg<span style="letter-spacing:-0.33px">e</span><span style="letter-spacing:0.72px">t</span></span>
<span class="t" style="left:1663.80px;top:769.00px;font-size:14px;line-height:18px;letter-spacing:-1.47px;color:#1967d2;">R<span style="letter-spacing:-1.22px">O</span><span style="letter-spacing:-0.17px">A</span><span style="letter-spacing:-1.02px">S</span><span style="letter-spacing:0.23px">)</span></span>
<span class="t" style="left:1785.10px;top:735.00px;font-size:14px;line-height:18px;letter-spacing:0.16px;color:#3367d6;">75<span style="letter-spacing:-0.14px">.</span>5<span style="display:inline-block;width:10.31px;letter-spacing:0;transform:scaleX(0.824);transform-origin:0 50%">%</span></span>
<span class="t" style="left:1888.70px;top:735.00px;font-size:14px;line-height:18px;letter-spacing:0.09px;color:#3c4043;">46<span style="letter-spacing:-0.21px">.</span>60<span style="display:inline-block;width:10.24px;letter-spacing:0;transform:scaleX(0.824);transform-origin:0 50%">%</span></span>
<span class="t" style="left:167.40px;top:837.00px;font-size:14px;line-height:18px;letter-spacing:-0.37px;color:#1a73e8;"><span style="letter-spacing:-0.82px">F</span><span style="letter-spacing:-1.07px">S</span><span style="letter-spacing:-1.47px">_</span><span style="letter-spacing:-1.07px">S</span><span style="letter-spacing:-0.17px">a</span><span style="letter-spacing:0.28px">l</span>e<span style="letter-spacing:0.23px">s</span><span style="letter-spacing:-1.47px">_</span><span style="letter-spacing:-0.22px">A</span><span style="letter-spacing:0.08px">2</span><span style="letter-spacing:-1.37px">G</span><span style="letter-spacing:-0.12px">h</span>ee<span style="letter-spacing:-1.47px">_</span><span style="letter-spacing:-0.22px">T</span><span style="letter-spacing:0.18px">o</span><span style="letter-spacing:0.08px">p</span><span style="letter-spacing:-1.02px">C</span><span style="letter-spacing:0.28px">i</span><span style="letter-spacing:0.68px">t</span><span style="letter-spacing:0.28px">i</span>e<span style="letter-spacing:0.23px">s</span><span style="letter-spacing:-0.42px"> </span><span style="letter-spacing:-0.27px">+</span></span>
<span class="t" style="left:168.07px;top:854.00px;font-size:14px;line-height:18px;letter-spacing:0.10px;color:#1a73e8;"><span style="letter-spacing:-0.20px">T</span><span style="letter-spacing:0.30px">i</span><span style="letter-spacing:-0.35px">e</span>r<span style="letter-spacing:-0.40px"> </span>2<span style="letter-spacing:-1.45px">_</span>10072025</span>
<span class="t" style="left:579.70px;top:845.00px;font-size:14px;line-height:18px;letter-spacing:0.01px;color:#3c4043;">128<span style="letter-spacing:-1.24px">,</span>160<span style="letter-spacing:-0.29px">.</span>63</span>
<span class="t" style="left:786.70px;top:845.00px;font-size:14px;line-height:18px;letter-spacing:0.07px;color:#3c4043;">320<span style="letter-spacing:-0.23px">.</span>00<span style="display:inline-block;width:10.22px;letter-spacing:0;transform:scaleX(0.824);transform-origin:0 50%">%</span></span>
<span class="t" style="left:888.80px;top:845.00px;font-size:14px;line-height:18px;letter-spacing:0.14px;color:#3c4043;">173<span style="letter-spacing:-1.11px">,</span>8<span style="letter-spacing:-0.73px">...</span></span>
<span class="t" style="left:968.68px;top:845.00px;font-size:14px;line-height:18px;letter-spacing:-0.03px;color:#3c4043;">2<span style="letter-spacing:-1.28px">,</span><span style="letter-spacing:-0.89px">...</span></span>
<span class="t" style="left:1035.00px;top:845.00px;font-size:14px;line-height:18px;letter-spacing:0.02px;color:#3c4043;">1<span style="letter-spacing:-0.28px">.</span>25<span style="display:inline-block;width:10.18px;letter-spacing:0;transform:scaleX(0.824);transform-origin:0 50%">%</span></span>
<span class="t" style="left:1245.34px;top:845.00px;font-size:14px;line-height:18px;letter-spacing:-0.13px;color:#3c4043;"><svg style="display:inline-block;vertical-align:baseline;width:7.67px;height:9.95px;margin-right:-0.43px;overflow:visible" preserveAspectRatio="none" viewBox="0 0 1059 1456"><path fill="#3c4043" transform="matrix(1 0 0 -1 0 1456)" d="M45 1298 92 1456H1017L971 1298H734Q798 1218 816 1100H1017L971 942H819Q802 784 691 684Q580 584 336 584L828 12V0H601L72 618L71 742H315Q448 742 524.5 798Q601 854 622 942H43L89 1100H620Q598 1190 523 1244Q448 1298 309 1298Z"/></svg><i style="display:inline-block;width:-0.23px"></i>42<span style="letter-spacing:-1.38px">,</span>023<span style="letter-spacing:-0.43px">.</span>21</span>
<span class="t" style="left:1404.90px;top:845.00px;font-size:14px;line-height:18px;letter-spacing:0.02px;color:#3c4043;">59<span style="letter-spacing:-0.28px">.</span>68</span>
<span class="t" style="left:1458.00px;top:845.00px;font-size:14px;line-height:18px;letter-spacing:0.02px;color:#3c4043;">1<span style="letter-spacing:-0.28px">.</span>12<span style="display:inline-block;width:10.18px;letter-spacing:0;transform:scaleX(0.824);transform-origin:0 50%">%</span></span>
<span class="t" style="left:1523.70px;top:845.00px;font-size:14px;line-height:18px;letter-spacing:0.16px;color:#3c4043;">3<span style="letter-spacing:-0.14px">.</span>05</span>
<span class="t" style="left:1577.70px;top:845.00px;font-size:14px;line-height:18px;letter-spacing:0.07px;color:#3c4043;">370<span style="letter-spacing:-0.23px">.</span>00<span style="display:inline-block;width:10.22px;letter-spacing:0;transform:scaleX(0.824);transform-origin:0 50%">%</span></span>
<span class="t" style="left:1663.80px;top:811.00px;font-size:14px;line-height:18px;letter-spacing:-0.08px;color:#1967d2;"><span style="letter-spacing:0.52px">M</span><span style="letter-spacing:-0.18px">a</span>x<span style="letter-spacing:0.27px">i</span><span style="letter-spacing:0.57px">m</span><span style="letter-spacing:0.27px">i</span>z<span style="letter-spacing:-0.38px">e</span></span>
<span class="t" style="left:1663.75px;top:828.00px;font-size:14px;line-height:18px;letter-spacing:0.15px;color:#1967d2;"><span style="letter-spacing:0.30px">c</span>o<span style="letter-spacing:-0.10px">n</span><span style="letter-spacing:-0.25px">v</span><span style="letter-spacing:-0.40px">e</span><span style="letter-spacing:0.05px">r</span><span style="letter-spacing:0.20px">s</span><span style="letter-spacing:0.25px">i</span>o<span style="letter-spacing:-0.10px">n</span></span>
<span class="t" style="left:1664.29px;top:845.00px;font-size:14px;line-height:18px;letter-spacing:-0.38px;color:#1967d2;">v<span style="letter-spacing:-0.33px">a</span><span style="letter-spacing:0.12px">l</span><span style="letter-spacing:-0.23px">u</span><span style="letter-spacing:-0.53px">e</span></span>
<span class="t" style="left:1663.30px;top:862.00px;font-size:14px;line-height:18px;letter-spacing:0.12px;color:#1967d2;"><span style="letter-spacing:0.17px">(</span><span style="letter-spacing:-0.18px">T</span><span style="letter-spacing:-0.13px">a</span>rg<span style="letter-spacing:-0.33px">e</span><span style="letter-spacing:0.72px">t</span></span>
<span class="t" style="left:1663.80px;top:879.00px;font-size:14px;line-height:18px;letter-spacing:-1.47px;color:#1967d2;">R<span style="letter-spacing:-1.22px">O</span><span style="letter-spacing:-0.17px">A</span><span style="letter-spacing:-1.02px">S</span><span style="letter-spacing:0.23px">)</span></span>
<span class="t" style="left:1786.10px;top:845.00px;font-size:14px;line-height:18px;letter-spacing:0.06px;color:#3367d6;">83<span style="letter-spacing:-0.24px">.</span>8<span style="display:inline-block;width:10.21px;letter-spacing:0;transform:scaleX(0.824);transform-origin:0 50%">%</span></span>
<span class="t" style="left:1888.70px;top:845.00px;font-size:14px;line-height:18px;letter-spacing:0.10px;color:#3c4043;">33<span style="letter-spacing:-0.20px">.</span>63<span style="display:inline-block;width:10.26px;letter-spacing:0;transform:scaleX(0.824);transform-origin:0 50%">%</span></span>
<span class="t" style="left:1663.80px;top:921.00px;font-size:14px;line-height:18px;letter-spacing:-0.08px;color:#1967d2;"><span style="letter-spacing:0.52px">M</span><span style="letter-spacing:-0.18px">a</span>x<span style="letter-spacing:0.27px">i</span><span style="letter-spacing:0.57px">m</span><span style="letter-spacing:0.27px">i</span>z<span style="letter-spacing:-0.38px">e</span></span>
<div class="clip" style="left:969px;top:560px;width:23px;height:60px"><span class="t" style="left:-0.04px;top:20.00px;font-size:14px;line-height:18px;letter-spacing:0.34px;color:#3c4043;-webkit-text-stroke:0.45px #3c4043;"><span style="letter-spacing:-1.06px">C</span>li<span style="letter-spacing:0.24px">c</span><span style="letter-spacing:0.19px">k</span><span style="letter-spacing:0.14px">s</span></span></div>
<div class="clip" style="left:1105px;top:560px;width:23px;height:60px"><span class="t" style="left:0.20px;top:11.00px;font-size:14px;line-height:18px;letter-spacing:-0.03px;color:#3c4043;-webkit-text-stroke:0.45px #3c4043;">A<span style="letter-spacing:-0.08px">v</span><span style="letter-spacing:0.12px">g</span>.</span>
<span class="t" style="left:0.36px;top:28.00px;font-size:14px;line-height:18px;letter-spacing:-1.37px;color:#3c4043;-webkit-text-stroke:0.45px #3c4043;">C<span style="letter-spacing:-0.82px">P</span>C</span></div>
<div class="clip" style="left:1472px;top:560px;width:23px;height:60px"><span class="t" style="left:-0.14px;top:11.00px;font-size:14px;line-height:18px;letter-spacing:-0.21px;color:#3c4043;-webkit-text-stroke:0.45px #3c4043;"><span style="letter-spacing:-1.16px">C</span><span style="letter-spacing:-0.01px">o</span>n<span style="letter-spacing:-0.26px">v</span>.</span>
<span class="t" style="left:9.79px;top:28.00px;font-size:14px;line-height:18px;letter-spacing:-0.05px;color:#3c4043;-webkit-text-stroke:0.45px #3c4043;">r<span style="letter-spacing:-0.50px">a</span><span style="letter-spacing:0.45px">t</span><span style="letter-spacing:-0.55px">e</span></span></div>
<div class="clip" style="left:1528px;top:550px;width:23px;height:80px"><span class="t" style="left:0.36px;top:4.00px;font-size:14px;line-height:18px;letter-spacing:-0.21px;color:#3c4043;-webkit-text-stroke:0.45px #3c4043;"><span style="letter-spacing:-1.16px">C</span><span style="letter-spacing:-0.01px">o</span>n<span style="letter-spacing:-0.26px">v</span>.</span>
<span class="t" style="left:1.60px;top:21.00px;font-size:14px;line-height:18px;letter-spacing:-0.22px;color:#3c4043;-webkit-text-stroke:0.45px #3c4043;">v<span style="letter-spacing:-0.37px">a</span><span style="letter-spacing:0.28px">l</span><span style="letter-spacing:-0.17px">u</span><span style="letter-spacing:-0.42px">e</span></span>
<span class="t" style="left:7.53px;top:55.00px;font-size:14px;line-height:18px;letter-spacing:0.33px;color:#3c4043;-webkit-text-stroke:0.45px #3c4043;">c<span style="letter-spacing:0.18px">o</span><span style="letter-spacing:0.23px">s</span><span style="letter-spacing:0.73px">t</span></span></div>
<div class="clip" style="left:1760px;top:560px;width:63px;height:60px"><span class="t" style="left:0.19px;top:11.00px;font-size:14px;line-height:18px;letter-spacing:0.36px;color:#3c4043;-webkit-text-stroke:0.45px #3c4043;"><span style="letter-spacing:-1.29px">O</span><span style="letter-spacing:0.01px">p</span><span style="letter-spacing:0.66px">t</span>i<span style="letter-spacing:0.46px">m</span>i<span style="letter-spacing:-0.04px">z</span><span style="letter-spacing:-0.29px">a</span><span style="letter-spacing:0.66px">t</span>i<span style="letter-spacing:0.11px">o</span><span style="letter-spacing:-0.09px">n</span></span>
<span class="t" style="left:45.62px;top:28.00px;font-size:14px;line-height:18px;letter-spacing:0.03px;color:#3c4043;-webkit-text-stroke:0.45px #3c4043;">s<span style="letter-spacing:0.13px">c</span><span style="letter-spacing:-0.02px">o</span>r<span style="letter-spacing:-0.47px">e</span></span></div>
<div class="clip" style="left:680px;top:714px;width:80px;height:60px"><span class="t" style="left:0.90px;top:13.00px;font-size:14px;line-height:18px;letter-spacing:-0.40px;color:#3c4043;"><span style="letter-spacing:-0.55px">P</span>e<span style="letter-spacing:0.05px">r</span><span style="letter-spacing:0.95px">f</span><span style="letter-spacing:0.15px">o</span><span style="letter-spacing:0.05px">r</span><span style="letter-spacing:0.55px">m</span><span style="letter-spacing:-0.20px">a</span><span style="letter-spacing:-0.10px">n</span><span style="letter-spacing:0.30px">c</span>e</span>
<span class="t" style="left:0.90px;top:30.00px;font-size:14px;line-height:18px;letter-spacing:0.38px;color:#3c4043;">M<span style="letter-spacing:-0.32px">a</span><span style="letter-spacing:-0.22px">x</span></span></div>
<div class="clip" style="left:1089px;top:724px;width:51px;height:40px"><span class="t" style="left:-2.81px;top:11.00px;font-size:14px;line-height:18px;letter-spacing:0.10px;color:#3c4043;"><svg style="display:inline-block;vertical-align:baseline;width:7.67px;height:9.95px;margin-right:-0.43px;overflow:visible" preserveAspectRatio="none" viewBox="0 0 1059 1456"><path fill="#3c4043" transform="matrix(1 0 0 -1 0 1456)" d="M45 1298 92 1456H1017L971 1298H734Q798 1218 816 1100H1017L971 942H819Q802 784 691 684Q580 584 336 584L828 12V0H601L72 618L71 742H315Q448 742 524.5 798Q601 854 622 942H43L89 1100H620Q598 1190 523 1244Q448 1298 309 1298Z"/></svg><i style="display:inline-block;width:0.03px"></i>14<span style="letter-spacing:-0.20px">.</span>56</span></div>
<div class="clip" style="left:680px;top:824px;width:80px;height:60px"><span class="t" style="left:0.90px;top:13.00px;font-size:14px;line-height:18px;letter-spacing:-0.40px;color:#3c4043;"><span style="letter-spacing:-0.55px">P</span>e<span style="letter-spacing:0.05px">r</span><span style="letter-spacing:0.95px">f</span><span style="letter-spacing:0.15px">o</span><span style="letter-spacing:0.05px">r</span><span style="letter-spacing:0.55px">m</span><span style="letter-spacing:-0.20px">a</span><span style="letter-spacing:-0.10px">n</span><span style="letter-spacing:0.30px">c</span>e</span>
<span class="t" style="left:0.90px;top:30.00px;font-size:14px;line-height:18px;letter-spacing:0.38px;color:#3c4043;">M<span style="letter-spacing:-0.32px">a</span><span style="letter-spacing:-0.22px">x</span></span></div>
<div class="clip" style="left:1089px;top:834px;width:51px;height:40px"><span class="t" style="left:-3.00px;top:11.00px;font-size:14px;line-height:18px;letter-spacing:0.10px;color:#3c4043;"><svg style="display:inline-block;vertical-align:baseline;width:7.67px;height:9.95px;margin-right:-0.43px;overflow:visible" preserveAspectRatio="none" viewBox="0 0 1059 1456"><path fill="#3c4043" transform="matrix(1 0 0 -1 0 1456)" d="M45 1298 92 1456H1017L971 1298H734Q798 1218 816 1100H1017L971 942H819Q802 784 691 684Q580 584 336 584L828 12V0H601L72 618L71 742H315Q448 742 524.5 798Q601 854 622 942H43L89 1100H620Q598 1190 523 1244Q448 1298 309 1298Z"/></svg><i style="display:inline-block;width:0.19px"></i>19<span style="letter-spacing:-0.20px">.</span>37</span></div>
</div>
</body></html>
